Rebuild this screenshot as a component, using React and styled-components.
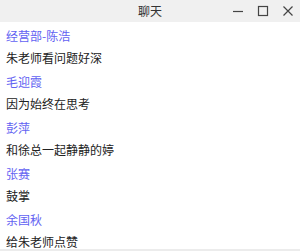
import styled, { createGlobalStyle } from 'styled-components'

const GlobalStyle = createGlobalStyle`
  html, body {
    margin: 0;
    padding: 0;
    background: #ffffff;
  }
  body {
    font-family: 'Noto Sans CJK SC', 'Noto Sans', sans-serif;
  }
`

const messages = [
  { name: '经营部-陈浩', text: '朱老师看问题好深' },
  { name: '毛迎霞', text: '因为始终在思考' },
  { name: '彭萍', text: '和徐总一起静静的婷' },
  { name: '张赛', text: '鼓掌' },
  { name: '余国秋', text: '给朱老师点赞' },
]

const Window = styled.div`
  width: 300px;
  height: 251px;
  display: flex;
  flex-direction: column;
  background: #fff;
  overflow: hidden;
`

const TitleBar = styled.div`
  height: 22px;
  flex-shrink: 0;
  background: #f0f0f0;
  display: grid;
  grid-template-columns: 1fr auto 1fr;
  align-items: center;
`

const Title = styled.div`
  grid-column: 2;
  font-size: 12px;
  color: #333;
  line-height: 22px;
`

const Controls = styled.div`
  grid-column: 3;
  justify-self: end;
  display: flex;
  align-items: center;
  height: 22px;
`

const ControlButton = styled.div`
  width: 25px;
  height: 22px;
  display: flex;
  align-items: center;
  justify-content: center;
  color: #444;
`

const List = styled.div`
  flex: 1;
  padding: 3px 6px 0;
  overflow: hidden;
`

const Item = styled.div`
  margin-bottom: 2px;
`

const Name = styled.div`
  font-size: 12px;
  line-height: 22px;
  color: #6262f2;
`

const Text = styled.div`
  font-size: 12px;
  line-height: 22px;
  color: #222;
`

const BottomBar = styled.div`
  height: 2px;
  flex-shrink: 0;
  background: #ececec;
`

const App = () => {
  return (
    <>
      <GlobalStyle />
      <Window>
        <TitleBar>
          <Title>聊天</Title>
          <Controls>
            <ControlButton>
              <svg width='12' height='12' viewBox='0 0 12 12'>
                <line x1='1' y1='6.5' x2='11' y2='6.5' stroke='currentColor' strokeWidth='1.2' />
              </svg>
            </ControlButton>
            <ControlButton>
              <svg width='12' height='12' viewBox='0 0 12 12'>
                <rect x='1.5' y='1.5' width='9' height='9' fill='none' stroke='currentColor' strokeWidth='1.2' />
              </svg>
            </ControlButton>
            <ControlButton>
              <svg width='12' height='12' viewBox='0 0 12 12'>
                <path d='M1.5 1.5 L10.5 10.5 M10.5 1.5 L1.5 10.5' stroke='currentColor' strokeWidth='1.2' />
              </svg>
            </ControlButton>
          </Controls>
        </TitleBar>
        <List>
          {messages.map((m) => (
            <Item key={m.name}>
              <Name>{m.name}</Name>
              <Text>{m.text}</Text>
            </Item>
          ))}
        </List>
        <BottomBar />
      </Window>
    </>
  )
}

export default App
